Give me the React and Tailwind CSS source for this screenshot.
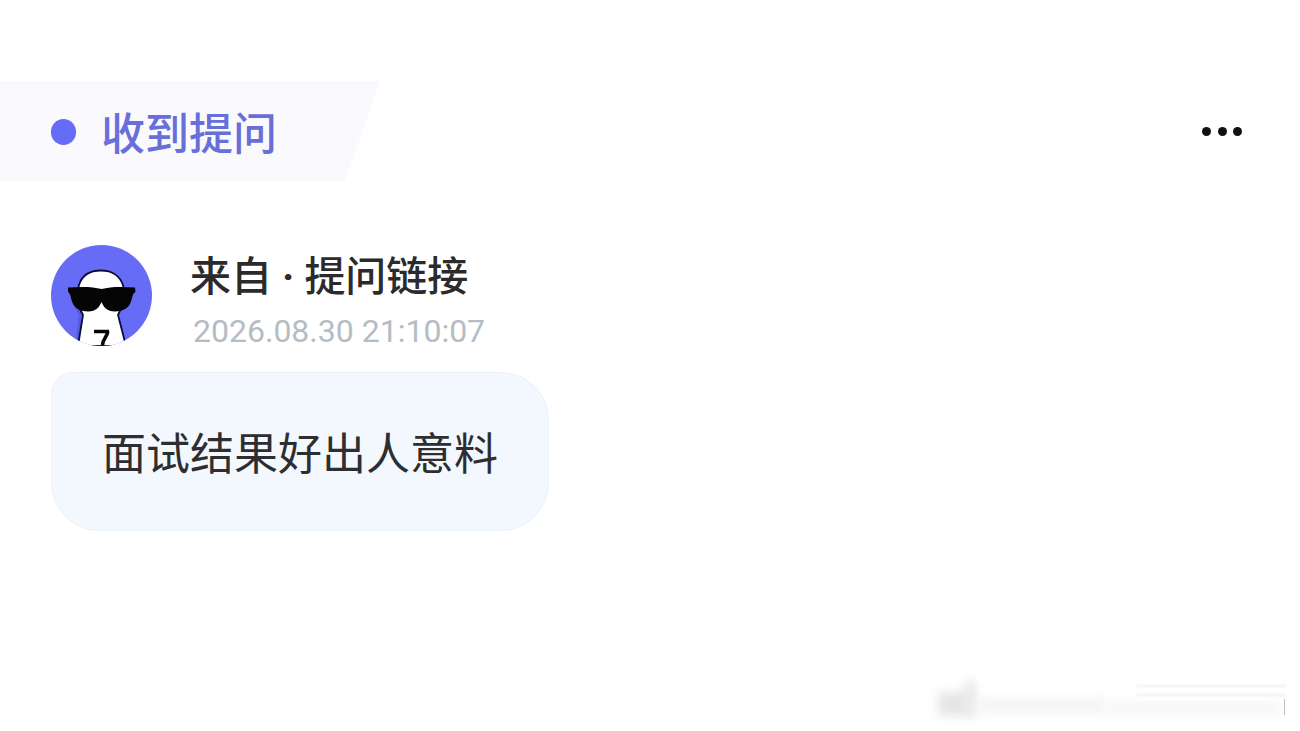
export default function App() {
  return (
    <div className="relative w-[1300px] h-[731px] overflow-hidden bg-white pt-[81px] font-['Noto_Sans_CJK_SC',sans-serif]">
      <div className="flex items-center justify-between pr-[58px]">
        <div className="flex h-[100px] w-[380px] items-center gap-[25px] bg-[#f9f9fe] pl-[51px] [clip-path:polygon(0_0,100%_0,345px_100%,0_100%)]">
          <span className="mt-[1px] h-[26px] w-[25px] rounded-full bg-[#666cf6]" />
          <span className="text-[44px] leading-[52px] font-medium text-[#696fd8]">收到提问</span>
        </div>
        <div className="flex gap-[6.5px]">
          <span className="h-[9px] w-[9px] rounded-full bg-[#111]" />
          <span className="h-[9px] w-[9px] rounded-full bg-[#111]" />
          <span className="h-[9px] w-[9px] rounded-full bg-[#111]" />
        </div>
      </div>

      <div className="mt-[64px] flex pl-[51px]">
        <svg width="101" height="101" viewBox="0 0 101 101" className="shrink-0">
          <defs>
            <clipPath id="c"><circle cx="50.5" cy="50.5" r="50.5" /></clipPath>
          </defs>
          <g clipPath="url(#c)">
            <rect width="101" height="101" fill="#666cf6" />
            <path d="M24 101 L28 70 C22 62 20 50 23 42 L30 42 L30 101 Z" fill="#4b50c4" opacity="0.55" />
            <path d="M27 101 L32 70 C27 62 25 50 28 40 C31 30 39 25.5 50 25.5 C61 25.5 69 31 72 40 C74 50 72 62 67 70 L75 101 Z" fill="#ffffff" stroke="#0b0b3a" strokeWidth="1.8" />
            <path d="M17 42.5 C30 41.5 42 41.5 50.5 44 C59 41.5 71 41.5 84 42.5 L84.5 47 C82 48 81.5 51 80.5 55 C78.5 63 72 66.5 64 66.5 C56 66.5 52.5 62 50.5 57 C48.5 62 45 66.5 37 66.5 C29 66.5 22.5 63 20.5 55 C19.5 51 19 48 17 47 Z" fill="#050505" />
            <path d="M43 86.5 L56.5 86.5 C57.5 90 52 93 51.5 100" fill="none" stroke="#050505" strokeWidth="3.6" />
          </g>
        </svg>
        <div className="ml-[38px] flex flex-col">
          <div className="mt-[2px] text-[41px] leading-[52px] font-medium text-[#2b2b2b] whitespace-nowrap">
            来自<span className="mx-[10px] font-['Roboto',sans-serif] font-bold">·</span>提问链接
          </div>
          <div className="mt-[9px] ml-[3px] text-[32px] leading-[38px] text-[#b4bcc4] font-['Roboto',sans-serif] whitespace-nowrap">2026.08.30 21:10:07</div>
        </div>
      </div>

      <div className="ml-[51px] mt-[22px] flex h-[159px] w-[498px] items-center rounded-[48px] rounded-tl-[22px] border border-[#e9f1f9] bg-[#f3f8fe] pb-[2px] pl-[50px]">
        <span className="text-[44px] leading-[56px] text-[#2e2e30] whitespace-nowrap">面试结果好出人意料</span>
      </div>

      <div className="absolute left-[936px] top-[678px] h-[42px] w-[354px]">
        <div className="absolute left-[2px] top-[14px] h-[24px] w-[36px] bg-[#e6e6e6] blur-[5px]" />
        <div className="absolute left-[28px] top-[2px] h-[36px] w-[12px] bg-[#ebebeb] blur-[4px]" />
        <div className="absolute left-[40px] top-[20px] h-[16px] w-[130px] bg-[#f5f5f5] blur-[4px]" />
        <div className="absolute left-[170px] top-[22px] h-[16px] w-[175px] bg-[#f8f8f8] blur-[4px]" />
        <div className="absolute left-[200px] top-[7px] h-[2px] w-[150px] bg-[#f0f0f0] blur-[1px]" />
        <div className="absolute left-[200px] top-[16px] h-[2px] w-[150px] bg-[#f0f0f0] blur-[1px]" />
        <div className="absolute left-[348px] top-[21px] h-[16px] w-[1px] bg-[#bdbdbd]" />
      </div>
    </div>
  );
}
